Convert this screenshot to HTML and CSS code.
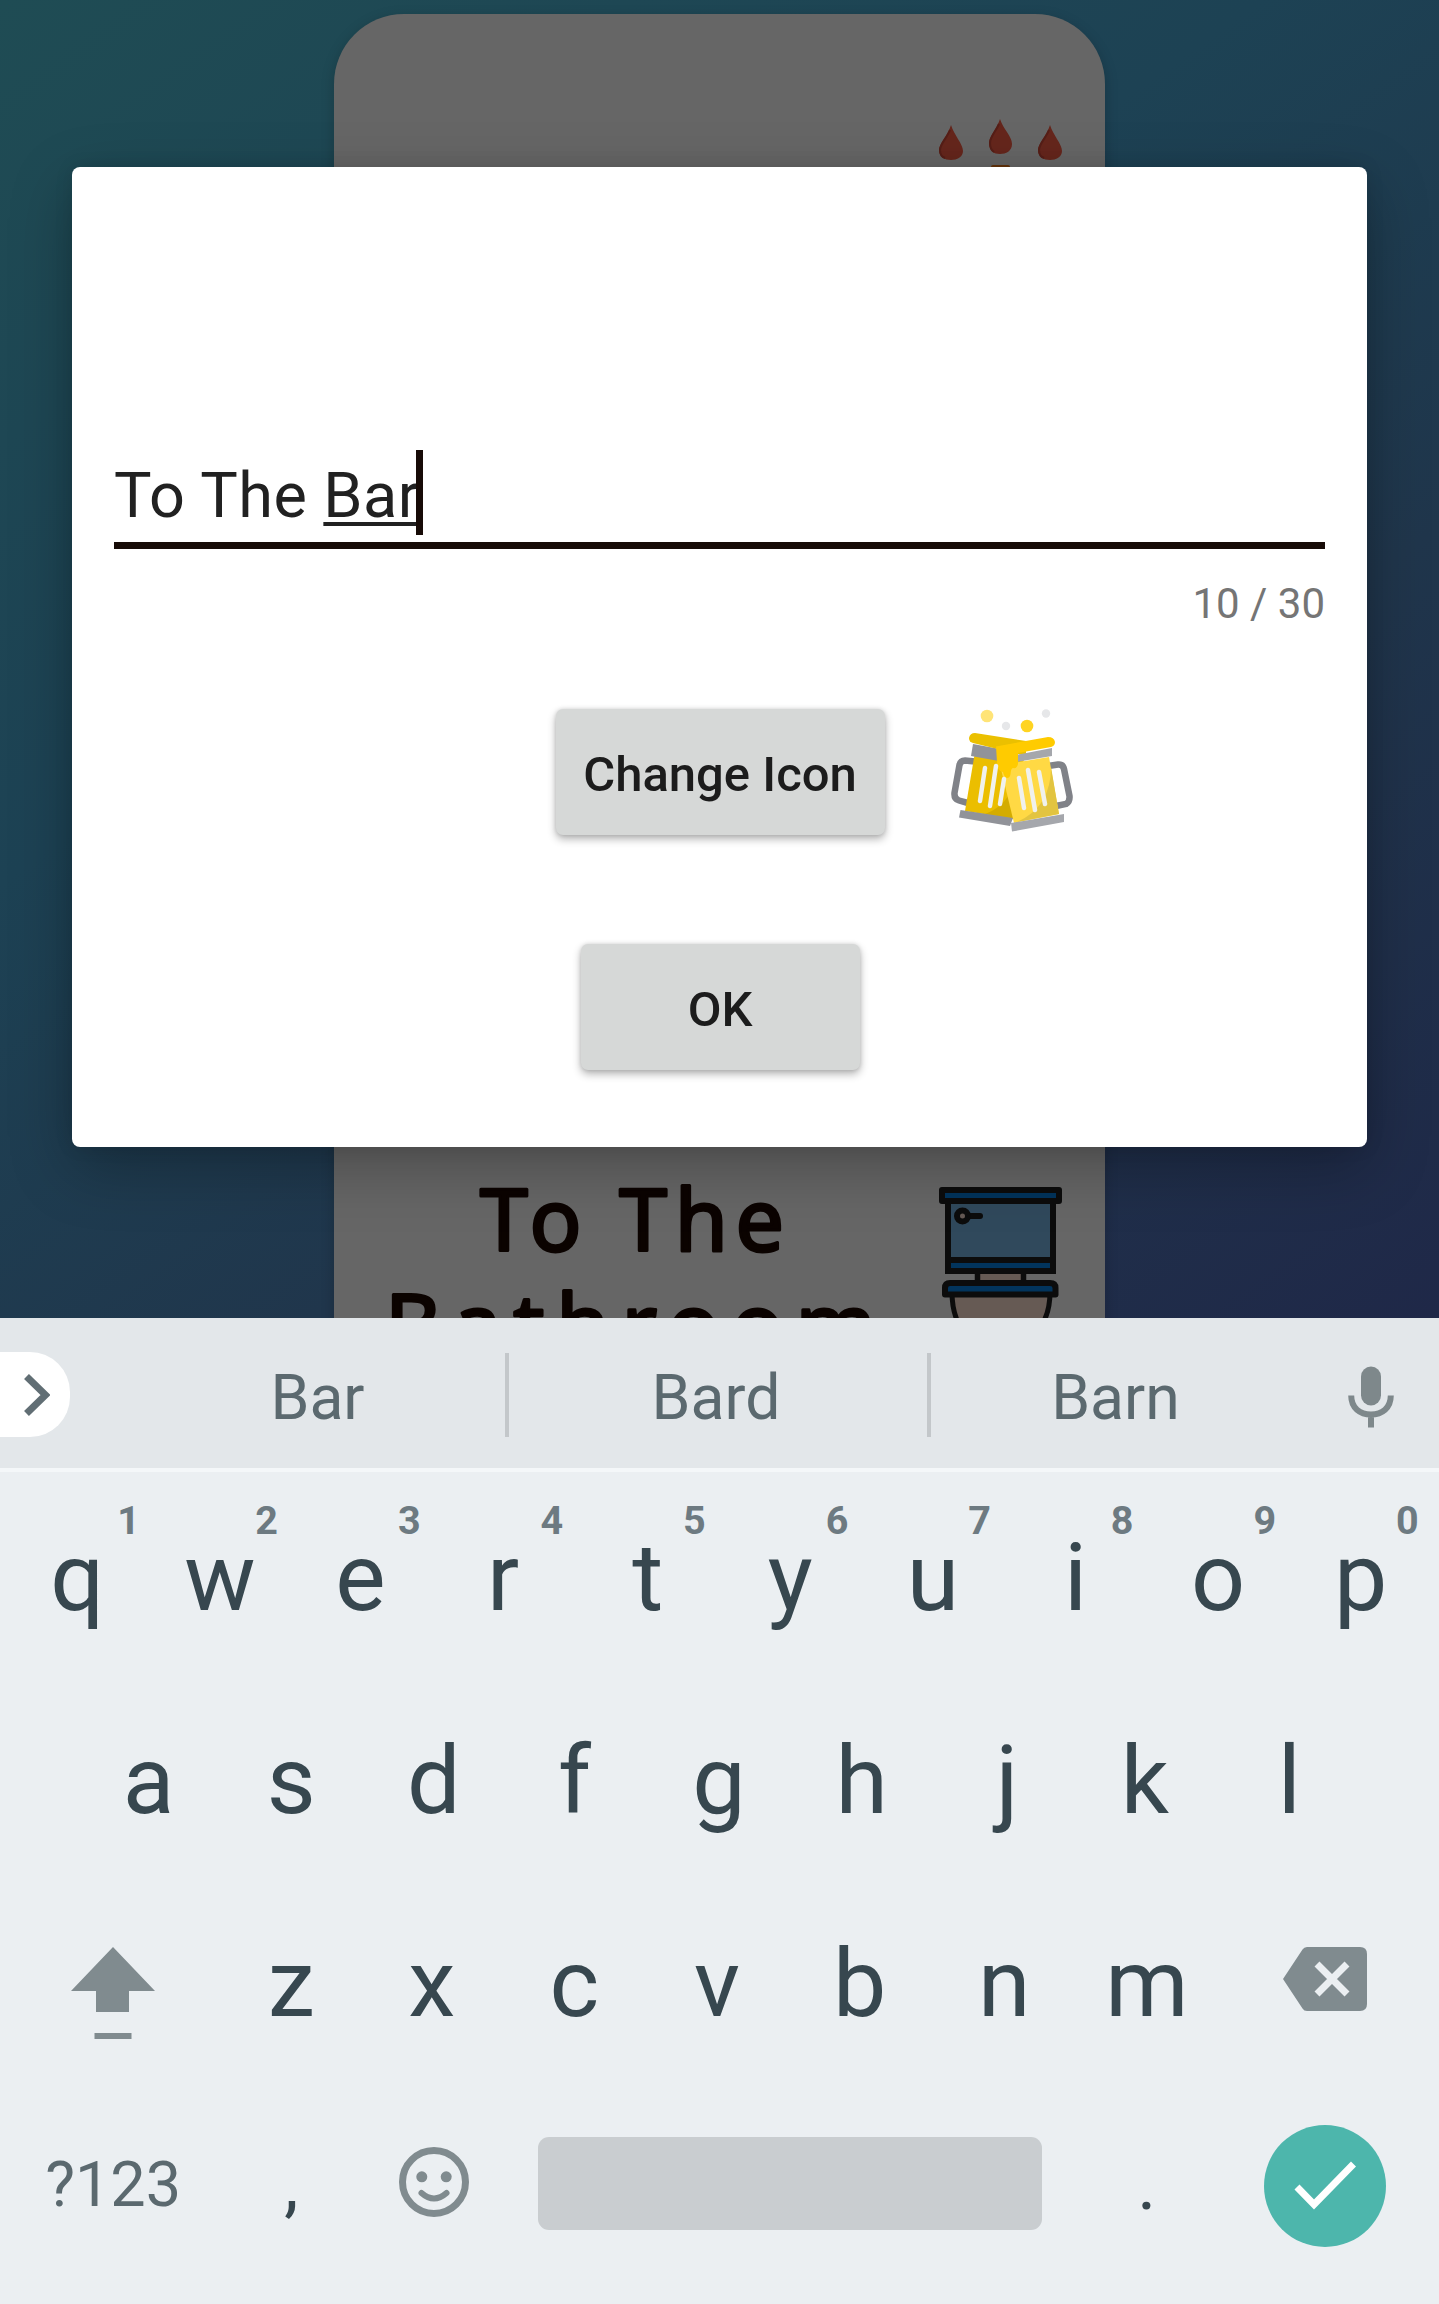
FILE: index.html
```html
<!DOCTYPE html>
<html lang="en">
<head>
<meta charset="utf-8">
<title>Edit button</title>
<link rel="stylesheet" href="styles.css">
</head>
<body>
<main class="stage">
  <section class="card">
    <svg class="card-art" viewBox="334 14 771 1304" aria-hidden="true">
      <g fill="#65261c">
        <path d="M951 125C954 135 963 144 963 151C963 157 957 160 951 160C945 160 939 157 939 150C939 144 948 135 951 125Z"/>
        <path d="M1000 119C1003 129 1012 136 1012 144C1012 151 1006 154 1000 154C994 154 989 151 989 143C989 136 997 129 1000 119Z"/>
        <path d="M1050 125C1053 135 1062 144 1062 151C1062 157 1056 160 1050 160C1044 160 1038 157 1038 150C1038 144 1047 135 1050 125Z"/>
      </g>
      <g fill="none" stroke="#551e17" stroke-width="2">
        <path d="M950 130C947 138 940 144 940 150C940 154 942 157 945 158"/>
        <path d="M999 124C996 131 990 137 990 143C990 148 991 150 994 152"/>
        <path d="M1049 130C1046 138 1039 144 1039 150C1039 154 1041 157 1044 158"/>
      </g>
      <rect x="991" y="165" width="19" height="6" rx="2" fill="#64340b"/>
      <g class="card-label">
        <text x="480" y="1251" textLength="304" lengthAdjust="spacing">To The</text>
        <text x="385" y="1356" textLength="491" lengthAdjust="spacing">Bathroom</text>
      </g>
      <g stroke="#0c0c0c" stroke-width="6">
        <path fill="#665a54" stroke-width="5" d="M952 1292C952 1308 956 1322 964 1332H1036C1046 1322 1050 1308 1050 1292Z"/>
        <path fill="#665a54" stroke-width="5.500" d="M977.500 1270V1284H1023.500V1270Z"/>
        <path fill="#30495c" d="M948 1200H1053V1271H948Z"/>
        <path fill="#02345c" d="M948 1260H1053V1271H948Z"/>
        <path fill="#02345c" stroke-linejoin="round" d="M942 1190H1059V1201H942Z"/>
        <path fill="#02345c" stroke-linejoin="round" d="M945 1294.500V1288Q945 1283 950 1283H1050Q1055.500 1283 1055.500 1288V1294.500Z"/>
        <path d="M965 1216H980" stroke-linecap="round"/>
        <circle cx="962.500" cy="1216" r="5.500" fill="#665a54"/>
      </g>
    </svg>
  </section>
  <div class="dialog">
    <div class="field">
      <span class="typed">To The <span class="composing">Bar</span></span><span class="caret"></span>
    </div>
    <div class="counter">10 / 30</div>
    <div class="icon-row">
      <button class="btn btn-wide">Change Icon</button>
      <svg class="beer" viewBox="0 0 126 126" aria-hidden="true">
        <circle cx="37" cy="9" r="6.300" fill="#ffe477"/>
        <circle cx="56" cy="19" r="4.200" fill="#e6e7e9"/>
        <circle cx="77" cy="19" r="6.300" fill="#ffd422"/>
        <circle cx="96" cy="6.500" r="4.200" fill="#e6e7e9"/>
        <path d="M25 54.500L15 53.500Q10.500 53.500 9.500 58L4.500 86Q4 92 9 93.500L18 96" fill="none" stroke="#808288" stroke-width="6.500"/>
        <path d="M98 59L108 57.500Q113 57 114 62L119.500 89Q120 95 116 97L106 99" fill="none" stroke="#808288" stroke-width="6.500"/>
        <path fill="#ebbe00" d="M25 45L74 52L63 112L15 104Z"/>
        <path fill="#d4ac00" d="M35 107Q54 100 62 82L66 112Z"/>
        <path fill="#919399" d="M23 37L50 42L49 54L21 49Z"/>
        <path fill="#ebc000" d="M25 26L76 34V49L23 36Q19 35 19 31Q20 26 25 26Z"/>
        <path fill="#919399" d="M10.500 103L63 111L60 119L9 110.500Z"/>
        <path fill="#ffd944" d="M50 58L99 50L109 107L64 116Z"/>
        <path fill="#e2c440" d="M101 60L109 107L67 115Q101 100 101 60Z"/>
        <path fill="#a5a7ac" d="M66 48L102 41V49L66 55Z"/>
        <path fill="#ffcb00" d="M46 39.500L98 30Q104 30 105 35Q105 39 101 40L68 46V57Q67 62 63 61Q61 61 60.500 67Q60 71 57 71Q54 70 53 65Q46 63 47 55Z"/>
        <path fill="#a5a7ac" d="M61 116L114 107V115L62 124.500Z"/>
        <path fill="none" stroke="#f0f1ed" stroke-width="4.500" stroke-linecap="round" d="M35 61L30 94M46 59L40 99M54 72L50 97M69 71L74 101M78 63L85 103M89 65L95 97"/>
      </svg>
    </div>
    <button class="btn btn-ok">OK</button>
  </div>
</main>

<section class="keyboard">
  <div class="suggestions">
    <div class="expand">
      <svg width="26" height="42" viewBox="0 0 26 42" aria-hidden="true"><path d="M2.500 2.500L21.500 21L2.500 39.500" fill="none" stroke="#616e74" stroke-width="7"/></svg>
    </div>
    <span class="word word-first">Bar</span>
    <i class="divider"></i>
    <span class="word word-mid">Bard</span>
    <i class="divider"></i>
    <span class="word word-last">Barn</span>
    <svg class="mic" viewBox="0 0 46 62" aria-hidden="true">
      <rect x="13" y="0.500" width="20" height="39" rx="10" fill="#7e888b"/>
      <path d="M3.200 29.500C3.200 42 12 48.500 23 48.500S42.800 42 42.800 29.500M23 48V61.500" fill="none" stroke="#7e888b" stroke-width="6"/>
    </svg>
  </div>
  <div class="keys">
    <div class="row">
      <span class="key">q<sup class="hint">1</sup></span><span class="key">w<sup class="hint">2</sup></span><span class="key tuck">e<sup class="hint">3</sup></span><span class="key tuck">r<sup class="hint">4</sup></span><span class="key">t<sup class="hint">5</sup></span><span class="key">y<sup class="hint">6</sup></span><span class="key">u<sup class="hint">7</sup></span><span class="key">i<sup class="hint">8</sup></span><span class="key">o<sup class="hint">9</sup></span><span class="key">p<sup class="hint">0</sup></span>
    </div>
    <div class="row">
      <span class="key">a</span><span class="key">s</span><span class="key">d</span><span class="key tuck">f</span><span class="key">g</span><span class="key">h</span><span class="key push">j</span><span class="key tuck">k</span><span class="key">l</span>
    </div>
    <div class="row">
      <span class="key key-wide">
        <svg class="shift" viewBox="0 0 84 92" aria-hidden="true"><path fill="#808b8f" d="M42 0L84 44H58V65H25V44H0ZM23.500 86H60.500V92H23.500Z"/></svg>
      </span><span class="key">z</span><span class="key tuck">x</span><span class="key tuck">c</span><span class="key tuck">v</span><span class="key tuck">b</span><span class="key">n</span><span class="key">m</span><span class="key key-wide">
        <svg class="backspace" viewBox="0 0 84 64" aria-hidden="true"><path fill="#808b8f" d="M24 0H77Q84 0 84 7V57Q84 64 77 64H24Q21 64 19.500 61.500L0 32L19.500 2.500Q21 0 24 0Z"/><path d="M34 17L64 47M64 17L34 47" stroke="#ebeff2" stroke-width="7"/></svg>
      </span>
    </div>
    <div class="row row-bottom">
      <span class="key key-wide key-symbols">?123</span>
      <span class="key key-punct">,</span>
      <span class="key">
        <svg class="smiley" viewBox="0 0 70 70" aria-hidden="true"><circle cx="35" cy="35" r="31.500" fill="none" stroke="#808b8f" stroke-width="7"/><circle cx="22.800" cy="29.800" r="5.500" fill="#808b8f"/><circle cx="47.200" cy="29.800" r="5.500" fill="#808b8f"/><path d="M22.500 46Q35 57 47.500 46" fill="none" stroke="#808b8f" stroke-width="6" stroke-linecap="round"/></svg>
      </span>
      <span class="key-space"></span>
      <span class="key key-punct">.</span>
      <span class="key key-wide">
        <svg class="enter" viewBox="0 0 122 122" aria-hidden="true"><circle cx="61" cy="61" r="61" fill="#4db6ac"/><path d="M33 62L50 79.500L89.500 39" fill="none" stroke="#fff" stroke-width="7"/></svg>
      </span>
    </div>
  </div>
</section>
</body>
</html>
```

FILE: styles.css
```css
* { box-sizing: border-box; }

body {
  margin: 0;
  width: 1439px;
  height: 2304px;
  overflow: hidden;
  font-family: Roboto, "Liberation Sans", sans-serif;
  background: #ebeff2;
}

.stage {
  position: relative;
  height: 1318px;
  padding-top: 14px;
  overflow: hidden;
  background: linear-gradient(145deg, #1f4c54 0%, #1d4254 38%, #20364c 66%, #1f2848 100%);
}

.card {
  width: 771px;
  height: 1400px;
  margin-left: 334px;
  border-radius: 70px;
  background: #666;
  box-shadow: 0 4px 14px rgba(0, 0, 0, .2);
}

.card-art { display: block; width: 771px; height: 1304px; }

.card-label {
  font: 86px "Noto Sans", sans-serif;
  fill: #0b0300;
  stroke: #0b0300;
  stroke-width: 3px;
  stroke-linejoin: round;
}

.dialog {
  position: absolute;
  top: 167px;
  left: 72px;
  width: 1295px;
  height: 980px;
  padding: 283px 42px 0;
  display: flex;
  flex-direction: column;
  align-items: center;
  border-radius: 8px;
  background: #fff;
  box-shadow: 0 20px 62px rgba(0, 0, 0, .27), 0 0 18px rgba(0, 0, 0, .1);
}

.field {
  width: 1211px;
  height: 99px;
  display: flex;
  border-bottom: 7px solid #170b07;
  color: #212121;
  font-size: 63px;
  line-height: 91px;
  letter-spacing: .45px;
}

.composing {
  text-decoration: underline;
  text-decoration-thickness: 4px;
  text-underline-offset: 5px;
  text-decoration-skip-ink: none;
}

.caret { width: 7px; height: 85px; margin-left: -4px; background: #170b07; }

.counter {
  align-self: flex-end;
  height: 50px;
  margin-top: 30px;
  color: #757575;
  font-size: 42px;
  line-height: 50px;
}

.icon-row {
  display: flex;
  align-items: flex-start;
  gap: 65px;
  margin: 80px 0 0 192px;
}

.btn {
  height: 126px;
  padding: 0;
  border: 0;
  border-radius: 7px;
  background: #d6d8d7;
  color: #1c1c1c;
  font: 500 49px/132px Roboto, "Liberation Sans", sans-serif;
  box-shadow: 0 4px 8px rgba(0, 0, 0, .3), 0 0 4px rgba(0, 0, 0, .12);
}

.btn-wide { width: 329px; }
.btn-ok { width: 279px; margin: 109px 0 0 1px; }
.beer { width: 126px; height: 126px; margin-top: -2px; }

.keyboard { height: 986px; background: #ebeff2; }

.suggestions {
  display: flex;
  align-items: center;
  height: 154px;
  padding-top: 3px;
  border-bottom: 4px solid #f4f7f9;
  background: #e3e7ea;
}

.expand {
  display: flex;
  align-items: center;
  width: 70px;
  height: 85px;
  padding-left: 24px;
  border-radius: 0 40px 40px 0;
  background: #fff;
}

.word {
  color: #5b696f;
  font-size: 62.5px;
  line-height: 84px;
  padding-top: 6px;
  text-align: center;
}

.word-first { width: 435px; padding-left: 60px; }
.word-mid { width: 418px; padding-right: 4px; }
.word-last { width: 372px; padding-right: 3px; }
.divider { width: 4px; height: 84px; background: #c3c7ca; }
.mic { width: 46px; height: 62px; margin: 4px 0 0 45px; }

.keys { padding: 4px 7px 0 6px; color: #37474f; font-size: 95px; }
.row { display: flex; justify-content: center; height: 203px; }

.key {
  position: relative;
  display: flex;
  align-items: center;
  justify-content: center;
  width: 142.6px;
  line-height: 203px;
}

.key.tuck { padding-right: 4px; }
.key.push { padding-left: 6px; }
.key-wide { width: 213.5px; }

.hint {
  position: absolute;
  top: 25px;
  left: 68px;
  width: 100px;
  color: #6d7a81;
  font-size: 39.5px;
  font-weight: 700;
  line-height: 40px;
  text-align: center;
}

.key:first-child .hint { left: 72.5px; }

.shift { width: 84px; height: 92px; margin-top: 19px; }
.backspace { width: 84px; height: 64px; margin-bottom: 9px; }

.row-bottom { height: 199px; align-items: center; }
.row-bottom .key { height: 199px; line-height: 199px; }
.key-symbols { color: #5b696f; font-size: 63px; }
.key-punct { font-size: 72px; }
.smiley { width: 70px; height: 70px; margin-bottom: 5px; }
.key-space { width: 504px; height: 93px; margin: 0 33.2px 2px; border-radius: 11px; background: #c9cdd0; }
.enter { width: 122px; height: 122px; margin-top: 2px; }
```
